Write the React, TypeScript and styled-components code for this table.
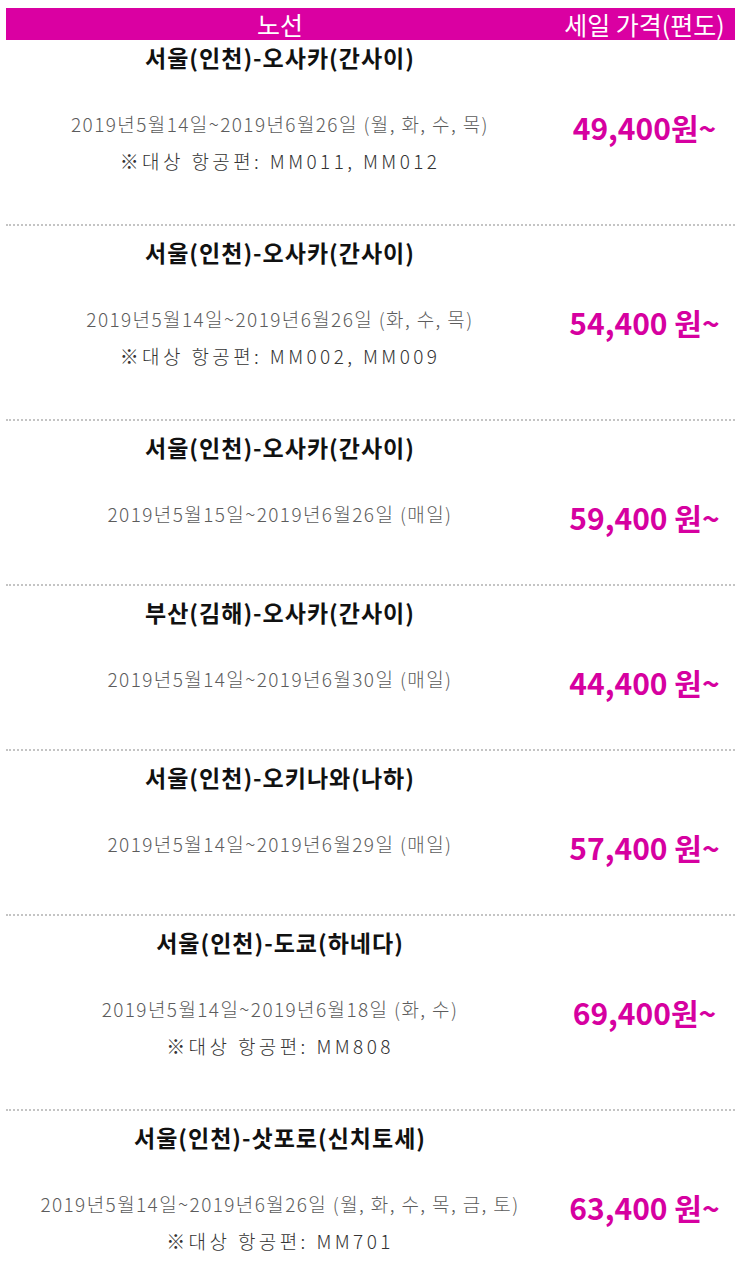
import React, { FC } from 'react';
import styled, { createGlobalStyle } from 'styled-components';

const GlobalStyle = createGlobalStyle`
	body {
		margin: 0;
		background: #fff;
		font-family: 'Noto Sans CJK KR', 'Noto Sans', sans-serif;
	}
`;

const Page = styled.div`
	padding: 8px 8px 0 6px;
`;

const Header = styled.div`
	display: grid;
	grid-template-columns: 548px 1fr;
	height: 32px;
	align-items: center;
	background-color: #da00a2;
	color: #fff;
	font-size: 25px;
	font-weight: 400;
	line-height: 32px;
`;

const HeaderCell = styled.div`
	text-align: center;
	white-space: nowrap;
`;

const Row = styled.div<{ $first?: boolean }>`
	padding: ${(p) => (p.$first ? '3px' : '12px')} 0 45px;
	border-bottom: 2px dotted #c4c4c4;
`;

const Title = styled.div`
	width: 548px;
	text-align: center;
	font-size: 23px;
	font-weight: 700;
	letter-spacing: 1px;
	line-height: 28px;
	color: #111;
	white-space: nowrap;
`;

const Body = styled.div`
	display: grid;
	grid-template-columns: 548px 1fr;
	margin-top: 34px;
	align-items: start;
`;

const Info = styled.div`
	display: flex;
	flex-direction: column;
	align-items: center;
	white-space: nowrap;
`;

const DateLine = styled.div`
	font-size: 19px;
	font-weight: 300;
	letter-spacing: 1.4px;
	line-height: 37px;
	color: #5c5c5c;
`;

const CodeLine = styled.div`
	font-size: 19px;
	font-weight: 300;
	line-height: 37px;
	color: #333;
	letter-spacing: 3.4px;
`;

const Price = styled.div`
	text-align: center;
	font-size: 30px;
	font-weight: 700;
	line-height: 44px;
	color: #d600a0;
	white-space: nowrap;
`;

interface RouteProps {
	title: string;
	period: string;
	flights?: string;
	price: string;
	first?: boolean;
}

const RouteRow: FC<RouteProps> = ({ title, period, flights, price, first }) => (
	<Row $first={first}>
		<Title>{title}</Title>
		<Body>
			<Info>
				<DateLine>{period}</DateLine>
				{flights && <CodeLine>※대상 항공편: {flights}</CodeLine>}
			</Info>
			<Price>{price}</Price>
		</Body>
	</Row>
);

const routes: RouteProps[] = [
	{ title: '서울(인천)-오사카(간사이)', period: '2019년5월14일~2019년6월26일 (월, 화, 수, 목)', flights: 'MM011, MM012', price: '49,400원~' },
	{ title: '서울(인천)-오사카(간사이)', period: '2019년5월14일~2019년6월26일 (화, 수, 목)', flights: 'MM002, MM009', price: '54,400 원~' },
	{ title: '서울(인천)-오사카(간사이)', period: '2019년5월15일~2019년6월26일 (매일)', price: '59,400 원~' },
	{ title: '부산(김해)-오사카(간사이)', period: '2019년5월14일~2019년6월30일 (매일)', price: '44,400 원~' },
	{ title: '서울(인천)-오키나와(나하)', period: '2019년5월14일~2019년6월29일 (매일)', price: '57,400 원~' },
	{ title: '서울(인천)-도쿄(하네다)', period: '2019년5월14일~2019년6월18일 (화, 수)', flights: 'MM808', price: '69,400원~' },
	{ title: '서울(인천)-삿포로(신치토세)', period: '2019년5월14일~2019년6월26일 (월, 화, 수, 목, 금, 토)', flights: 'MM701', price: '63,400 원~' },
];

const App: FC = () => (
	<>
		<GlobalStyle />
		<Page>
			<Header>
				<HeaderCell>노선</HeaderCell>
				<HeaderCell>세일 가격(편도)</HeaderCell>
			</Header>
			{routes.map((r, i) => (
				<RouteRow key={i} {...r} first={i === 0} />
			))}
		</Page>
	</>
);

export default App;
